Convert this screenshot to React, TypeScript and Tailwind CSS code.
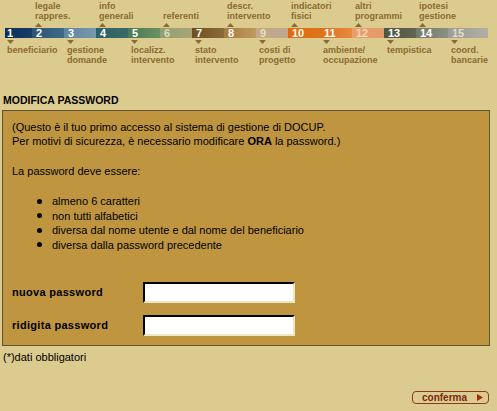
import React from 'react';

type Step = {
  n: number;
  from: string;
  to: string;
  label: string[];
  top: boolean;
  faded?: boolean;
  w: string;
};

const steps: Step[] = [
  { n: 1, from: 'from-[#0b2f5c]', to: 'to-[#163d68]', label: ['beneficiario'], top: false, w: 'w-[27px]' },
  { n: 2, from: 'from-[#2c5478]', to: 'to-[#3f6888]', label: ['legale', 'rappres.'], top: true, w: 'w-[32px]' },
  { n: 3, from: 'from-[#5e86a0]', to: 'to-[#7898ac]', label: ['gestione', 'domande'], top: false, w: 'w-[32px]' },
  { n: 4, from: 'from-[#2e6068]', to: 'to-[#3a6a66]', label: ['info', 'generali'], top: true, w: 'w-[32px]' },
  { n: 5, from: 'from-[#4a7a58]', to: 'to-[#6a9060]', label: ['localizz.', 'intervento'], top: false, w: 'w-[32px]' },
  { n: 6, from: 'from-[#90a070]', to: 'to-[#a8a478]', label: ['referenti'], top: true, faded: true, w: 'w-[32px]' },
  { n: 7, from: 'from-[#6e5020]', to: 'to-[#8a6a38]', label: ['stato', 'intervento'], top: false, w: 'w-[32px]' },
  { n: 8, from: 'from-[#a47c40]', to: 'to-[#c09a60]', label: ['descr.', 'intervento'], top: true, w: 'w-[32px]' },
  { n: 9, from: 'from-[#c4aa84]', to: 'to-[#bca890]', label: ['costi di', 'progetto'], top: false, faded: true, w: 'w-[32px]' },
  { n: 10, from: 'from-[#dd6a10]', to: 'to-[#e07418]', label: ['indicatori', 'fisici'], top: true, w: 'w-[32px]' },
  { n: 11, from: 'from-[#dd7014]', to: 'to-[#e88a40]', label: ['ambiente/', 'occupazione'], top: false, w: 'w-[32px]' },
  { n: 12, from: 'from-[#eaa068]', to: 'to-[#e29a68]', label: ['altri', 'programmi'], top: true, faded: true, w: 'w-[32px]' },
  { n: 13, from: 'from-[#505440]', to: 'to-[#606450]', label: ['tempistica'], top: false, w: 'w-[32px]' },
  { n: 14, from: 'from-[#72786a]', to: 'to-[#8a9080]', label: ['ipotesi', 'gestione'], top: true, w: 'w-[32px]' },
  { n: 15, from: 'from-[#9c9c94]', to: 'to-[#b0aea4]', label: ['coord.', 'bancarie'], top: false, faded: true, w: 'w-[40px]' },
];

const ArrowUp = () => (
  <svg width="7" height="4" viewBox="0 0 7 4" className="block">
    <polygon points="3.5,0 7,4 0,4" fill="#8a6a30" />
  </svg>
);

const ArrowDown = () => (
  <svg width="7" height="4" viewBox="0 0 7 4" className="block">
    <polygon points="0,0 7,0 3.5,4" fill="#8a6a30" />
  </svg>
);

const StepBar = () => (
  <div className="flex pl-[5px] h-[66px]">
    {steps.map((s) => {
      const pad = s.n === 1 ? 'pl-[2px]' : 'pl-[3px]';
      return (
        <div key={s.n} className={`${s.w} flex flex-col shrink-0`}>
          {/* label above */}
          <div className={`h-[22px] pb-[1px] flex flex-col justify-end ${pad}`}>
            {s.top &&
              s.label.map((l) => (
                <div key={l} className="text-[9px] leading-[10px] font-bold text-[#8a6a30] whitespace-nowrap">
                  {l}
                </div>
              ))}
          </div>
          <div className={`h-[6px] pt-[1px] ${pad}`}>{s.top && <ArrowUp />}</div>
          <div className={`h-[10px] flex items-center bg-linear-to-r ${s.from} ${s.to} ${s.n === 1 ? 'pl-[2px]' : 'pl-[4px]'}`}>
            <span className={`text-[11px] leading-[10px] font-bold ${s.faded ? 'text-[#f1ead6]/80' : 'text-white'}`}>
              {s.n}
            </span>
          </div>
          <div className={`h-[6px] pt-[2px] ${pad}`}>{!s.top && <ArrowDown />}</div>
          <div className={`pt-[1px] ${pad}`}>
            {!s.top &&
              s.label.map((l) => (
                <div key={l} className="text-[9px] leading-[10px] font-bold text-[#8a6a30] whitespace-nowrap">
                  {l}
                </div>
              ))}
          </div>
        </div>
      );
    })}
  </div>
);

const rules = [
  'almeno 6 caratteri',
  'non tutti alfabetici',
  'diversa dal nome utente e dal nome del beneficiario',
  'diversa dalla password precedente',
];

const PwdField = ({ label }: { label: string }) => (
  <div className="flex items-center h-[21px]">
    <label className="w-[131px] text-[11px] font-bold tracking-[0.3px]">{label}</label>
    <input
      type="password"
      className="w-[152px] h-[21px] bg-white border-2 border-t-black border-l-black border-b-[#efe6c4] border-r-[#efe6c4] outline-none"
    />
  </div>
);

export default function App() {
  return (
    <div className="w-[497px] h-[411px] bg-[#dccb8e] overflow-hidden text-black font-['Liberation_Sans',Arial,sans-serif]">
      <StepBar />

      <div className="mt-[28px] pl-[3px] text-[10.5px] leading-[12px] font-bold">MODIFICA PASSWORD</div>

      <div className="mt-[4px] ml-[2px] w-[488px] bg-[#bf963f] border border-[#5e5535] pt-[9px] pb-[9px] pl-[9px] text-[11px]">
        <div className="leading-[14px]">
          <p>(Questo è il tuo primo accesso al sistema di gestione di DOCUP.</p>
          <p>
            Per motivi di sicurezza, è necessario modificare <b>ORA</b> la password.)
          </p>
        </div>
        <p className="mt-[16px] leading-[14px]">La password deve essere:</p>
        <ul className="mt-[16px]">
          {rules.map((r) => (
            <li key={r} className="flex items-center leading-[14.5px]">
              <span className="ml-[25px] mr-[10px] w-[5px] h-[5px] rounded-full bg-black shrink-0" />
              {r}
            </li>
          ))}
        </ul>
        <div className="mt-[30px] flex flex-col gap-[12px]">
          <PwdField label="nuova password" />
          <PwdField label="ridigita password" />
        </div>
      </div>

      <div className="mt-[4px] pl-[3px] text-[11px] leading-[14px]">(*)dati obbligatori</div>

      <div className="mt-[27px] flex justify-end pr-[8px]">
        <button className="w-[77px] h-[13px] border border-[#8a3a20] rounded-[4px] flex items-center pl-[9px] pr-[5px] justify-between">
          <span className="text-[10px] leading-[10px] font-bold text-[#7a2810]">conferma</span>
          <svg width="6" height="7" viewBox="0 0 6 7">
            <polygon points="0,0 6,3.5 0,7" fill="#a02a10" />
          </svg>
        </button>
      </div>
    </div>
  );
}
